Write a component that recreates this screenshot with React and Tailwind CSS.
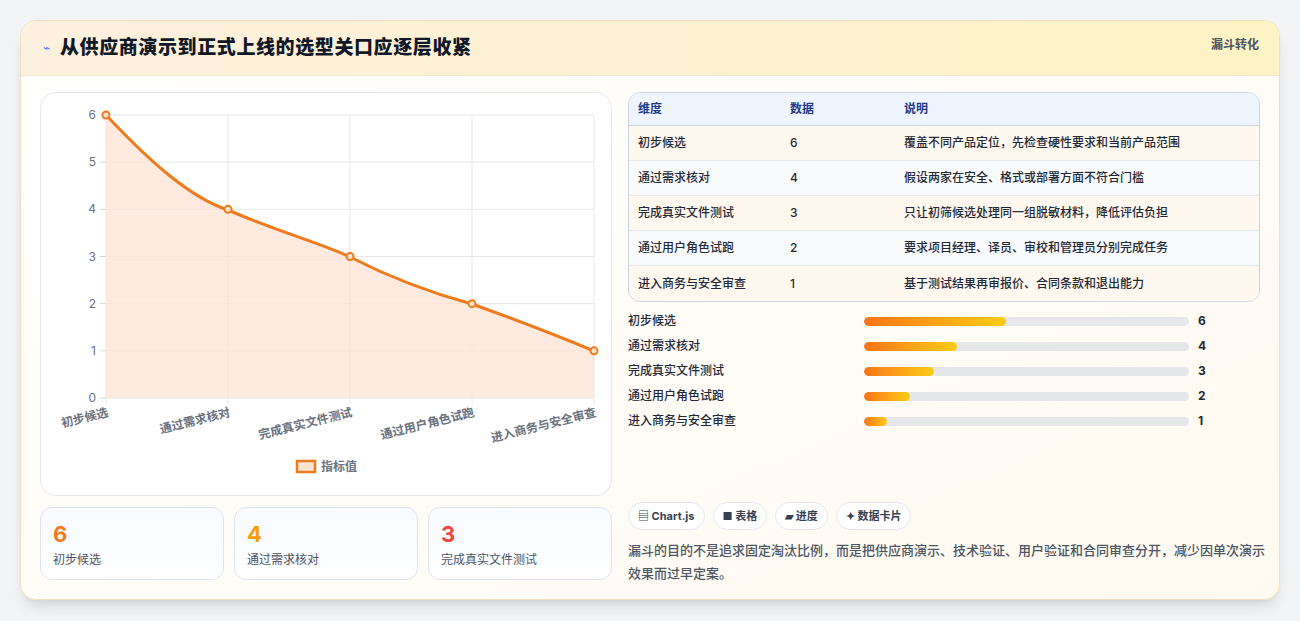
import React from "react"

const rows = [
  { name: "初步候选", v: 6, note: "覆盖不同产品定位，先检查硬性要求和当前产品范围", w: "43.7%" },
  { name: "通过需求核对", v: 4, note: "假设两家在安全、格式或部署方面不符合门槛", w: "28.6%" },
  { name: "完成真实文件测试", v: 3, note: "只让初筛候选处理同一组脱敏材料，降低评估负担", w: "21.5%" },
  { name: "通过用户角色试跑", v: 2, note: "要求项目经理、译员、审校和管理员分别完成任务", w: "14.2%" },
  { name: "进入商务与安全审查", v: 1, note: "基于测试结果再审报价、合同条款和退出能力", w: "7.1%" },
]

const Chart = () => {
  const x0 = 65, x1 = 553, y0 = 305, y1 = 22
  const xs = rows.map((_, i) => x0 + ((x1 - x0) / 4) * i)
  const ys = rows.map((r) => y0 - ((y0 - y1) / 6) * r.v)
  const line = "M65,22 C110,70 150,105 187,117 C240,140 280,150 309,164 C350,185 390,200 431,211 C470,225 510,240 553,258"
  return (
    <svg width="572" height="403" viewBox="0 0 572 403" className="block">
      {[0, 1, 2, 3, 4, 5, 6].map((t) => {
        const y = y0 - ((y0 - y1) / 6) * t
        return (
          <g key={t}>
            <line x1={x0} x2={x1} y1={y} y2={y} stroke="#e5e7eb" />
            <line x1={x0 - 6} x2={x0} y1={y} y2={y} stroke="#d1d5db" />
            <text x={x0 - 10} y={y + 4} fontSize="12" fill="#6b7280" textAnchor="end">{t}</text>
          </g>
        )
      })}
      {xs.map((x, i) => (
        <line key={i} x1={x} x2={x} y1={y1} y2={y0 + 6} stroke="#e5e7eb" />
      ))}
      <path d={line + ` L553,${y0} L65,${y0} Z`} fill="#fde3d3" fillOpacity="0.75" />
      <path d={line} fill="none" stroke="#f07b1d" strokeWidth="3" />
      {xs.map((x, i) => (
        <circle key={i} cx={x} cy={ys[i]} r="3.5" fill="#fde3d3" stroke="#f07b1d" strokeWidth="2" />
      ))}
      {rows.map((r, i) => (
        <text key={i} x={xs[i] + 3} y={y0 + 18} fontSize="12" fontWeight="600" fill="#6b7280" textAnchor="end" transform={`rotate(-14 ${xs[i] + 3} ${y0 + 18})`}>{r.name}</text>
      ))}
      <rect x="256" y="368" width="18" height="11" fill="#fde3d3" stroke="#f07b1d" strokeWidth="2.5" />
      <text x="280" y="378" fontSize="12" fontWeight="600" fill="#6b7280">指标值</text>
    </svg>
  )
}

export default function App() {
  return (
    <div className="w-[1300px] h-[621px] bg-[#f3f4f6] p-5 pb-0" style={{ fontFamily: "Inter, 'Noto Sans CJK SC', sans-serif" }}>
      <div className="h-[580px] rounded-2xl border border-[#f3dfc0] bg-gradient-to-br from-white to-[#fffaf0] shadow-lg overflow-hidden">
        <div className="h-[55px] flex items-center justify-between px-5 bg-gradient-to-r from-[#fdf0de] to-[#fdf3c4] border-b border-[#f1e6d0]">
          <div className="flex items-center gap-[10px] pl-[2px]">
            <span className="text-[#3b82f6] text-xs">⌁</span>
            <h1 className="text-[19px] font-extrabold tracking-[0.6px] text-[#111827]">从供应商演示到正式上线的选型关口应逐层收紧</h1>
          </div>
          <span className="text-xs font-bold text-[#4b5563] self-start mt-4">漏斗转化</span>
        </div>
        <div className="flex gap-4 px-[19px] pt-[16px]">
          <div className="w-[572px] flex flex-col gap-[11px]">
            <div className="h-[404px] rounded-2xl border border-[#e5e7eb] bg-white overflow-hidden">
              <Chart />
            </div>
            <div className="grid grid-cols-3 gap-[10px]">
              {rows.slice(0, 3).map((r, i) => (
                <div key={i} className="h-[73px] rounded-xl border border-[#dbe4f0] bg-gradient-to-b from-[#f7faff] to-white px-3 pt-3">
                  <div className={`text-[22px] font-bold leading-7 ${i === 0 ? "text-[#f07b1d]" : i === 1 ? "text-[#f59e0b]" : "text-[#ef4444]"}`}>{r.v}</div>
                  <div className="text-xs text-[#4b5563] mt-1">{r.name}</div>
                </div>
              ))}
            </div>
          </div>
          <div className="flex-1 flex flex-col">
            <div className="rounded-xl border border-[#cbd5e1] overflow-hidden text-xs">
              <div className="flex h-[33px] items-center bg-[#eef5ff] border-b border-[#cbd5e1] font-bold text-[#1e3a8a]">
                <div className="w-[161px] pl-[9px]">维度</div>
                <div className="w-[114px]">数据</div>
                <div>说明</div>
              </div>
              {rows.map((r, i) => (
                <div key={i} className={`flex h-[35px] items-center font-medium text-[#1f2937] ${i < 4 ? "border-b border-[#e5e7eb]" : ""} ${i % 2 ? "bg-[#f8fafc]" : "bg-[#fff8ee]"}`}>
                  <div className="w-[161px] pl-[9px]">{r.name}</div>
                  <div className="w-[114px]">{r.v}</div>
                  <div>{r.note}</div>
                </div>
              ))}
            </div>
            <div className="flex flex-col gap-[9px] mt-[11px]">
              {rows.map((r, i) => (
                <div key={i} className="flex items-center h-4 text-xs font-medium text-[#1f2937]">
                  <div className="w-[236px]">{r.name}</div>
                  <div className="w-[325px] h-[9px] rounded-full bg-[#e5e7eb] overflow-hidden">
                    <div className="h-full rounded-full bg-gradient-to-r from-[#f97316] to-[#facc15]" style={{ width: r.w }} />
                  </div>
                  <div className="ml-[9px] font-bold">{r.v}</div>
                </div>
              ))}
            </div>
            <div className="flex gap-2 mt-[73px]">
              {["▤ Chart.js", "■ 表格", "▰ 进度", "✦ 数据卡片"].map((c) => (
                <span key={c} className="h-7 px-[9px] flex items-center rounded-full border border-[#e5e7eb] bg-white text-[11px] font-bold text-[#374151]">{c}</span>
              ))}
            </div>
            <p className="mt-[9px] text-[13px] leading-[23px] font-medium text-[#4b5563] -mr-2">漏斗的目的不是追求固定淘汰比例，而是把供应商演示、技术验证、用户验证和合同审查分开，减少因单次演示效果而过早定案。</p>
          </div>
        </div>
      </div>
    </div>
  )
}
